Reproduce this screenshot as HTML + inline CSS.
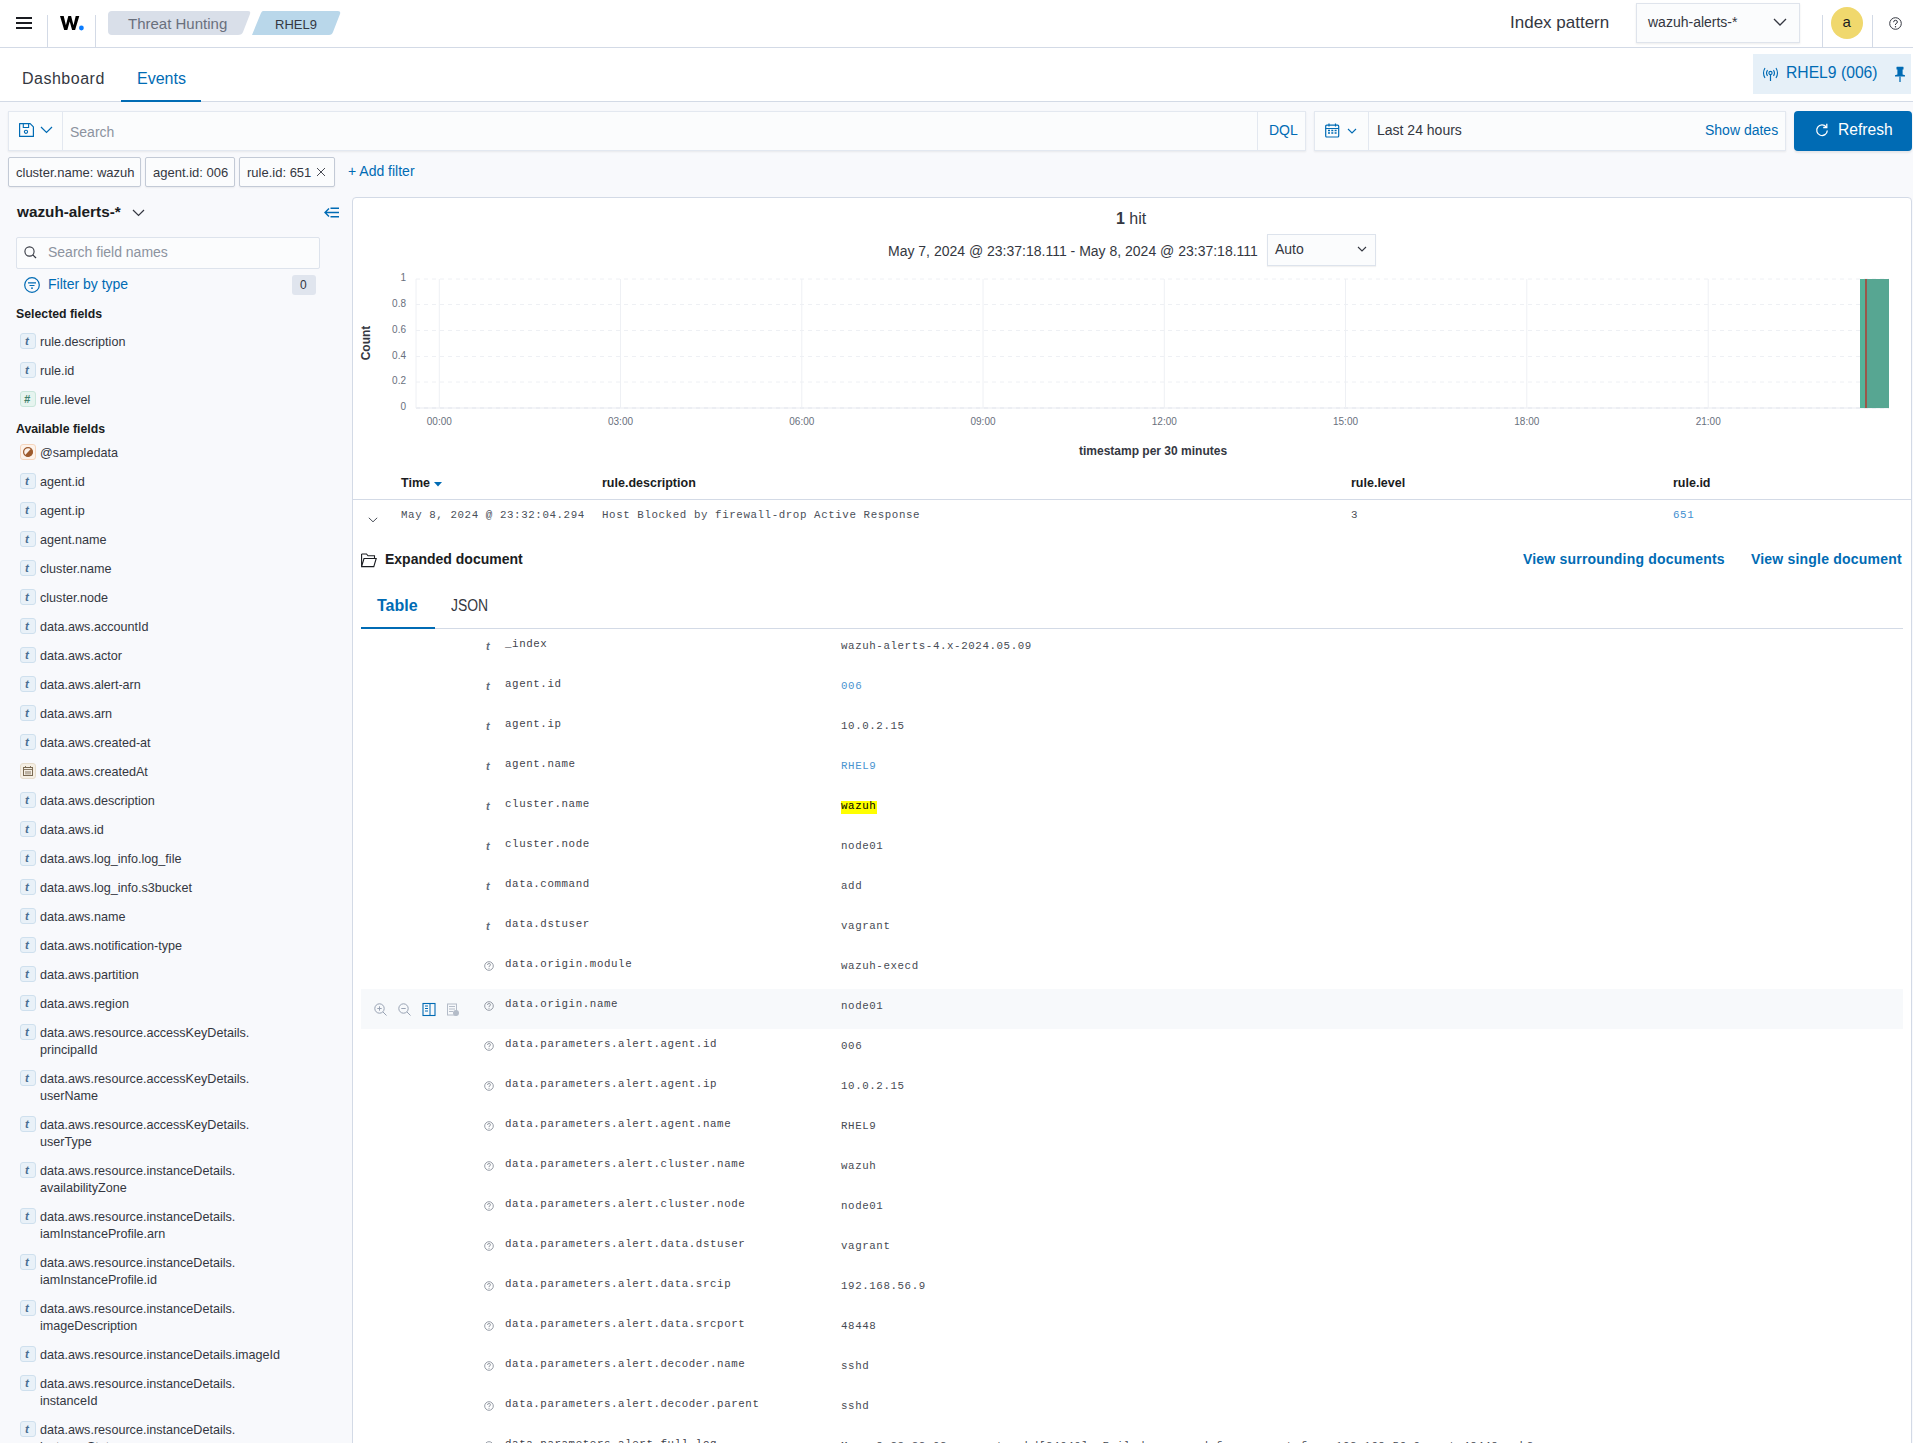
<!DOCTYPE html><html><head><meta charset="utf-8"><title>Wazuh</title><style>
*{box-sizing:border-box;margin:0;padding:0}
html,body{width:1913px;height:1443px;overflow:hidden}
body{position:relative;background:#f8f9fc;font-family:"Liberation Sans",sans-serif;color:#343741}
.abs{position:absolute}
.t{position:absolute;white-space:nowrap;line-height:1}
.mono{font-family:"Liberation Mono",monospace;font-size:10.8px !important;letter-spacing:0.59px !important}
.b{font-weight:bold}
.link{color:#006bb4}
svg{position:absolute;overflow:visible}
</style></head><body>
<div class="abs" style="left:0;top:0;width:1913px;height:48px;background:#fff;border-bottom:1px solid #d3dae6"></div>
<div class="abs" style="left:16px;top:17px;width:16px;height:2px;background:#1a1c21"></div>
<div class="abs" style="left:16px;top:22px;width:16px;height:2px;background:#1a1c21"></div>
<div class="abs" style="left:16px;top:27px;width:16px;height:2px;background:#1a1c21"></div>
<div class="abs" style="left:47px;top:15px;width:1px;height:32px;background:#d3dae6"></div>
<div class="abs" style="left:95px;top:15px;width:1px;height:32px;background:#d3dae6"></div>
<svg style="left:60px;top:15.7px" width="26" height="16"><path d="M0,0 H3.7 L5.9,9.2 L8.3,0 H11.1 L13.5,9.2 L15.7,0 H19.3 L15.1,14.1 H12.1 L9.7,5.4 L7.3,14.1 H4.2 Z" fill="#000"/><circle cx="21.4" cy="12" r="2.4" fill="#0a7cff"/></svg>
<svg style="left:0;top:0" width="400" height="48"><path d="M112,11 H248 Q251,11 250,14 L243,32 Q242,35 238,35 H112 Q108,35 108,31 V15 Q108,11 112,11 Z" fill="#d9dfe9"/><path d="M263,11 H338 Q341,11 340,14 L333,32 Q332,35 329,35 H252 L261,13 Q262,11 263,11 Z" fill="#b9d7ea"/></svg>
<div class="t" style="left:128px;top:16px;font-size:15px;color:#69707d">Threat Hunting</div>
<div class="t" style="left:275px;top:18px;font-size:13px;color:#343741">RHEL9</div>
<div class="t" style="left:1510px;top:14px;font-size:17px;color:#343741">Index pattern</div>
<div class="abs" style="left:1636px;top:3px;width:164px;height:40px;background:#fbfcfd;border:1px solid #dfe4ec;box-shadow:0 1px 2px rgba(0,0,0,.08)"></div>
<div class="t" style="left:1648px;top:15px;font-size:14px;color:#343741">wazuh-alerts-*</div>
<svg style="left:1773px;top:17px" width="14" height="10"><path d="M1,2 L7,8 L13,2" fill="none" stroke="#343741" stroke-width="1.3"/></svg>
<div class="abs" style="left:1822px;top:15px;width:1px;height:32px;background:#d3dae6"></div>
<div class="abs" style="left:1831px;top:7px;width:32px;height:32px;border-radius:50%;background:#f0d86d"></div>
<div class="t" style="left:1842.5px;top:14px;font-size:15px;color:#1a1c21">a</div>
<div class="abs" style="left:1872px;top:15px;width:1px;height:32px;background:#d3dae6"></div>
<svg style="left:1889px;top:17px" width="14" height="14"><circle cx="6.5" cy="6.5" r="5.8" fill="none" stroke="#343741" stroke-width="1"/><path d="M4.6,5.2 Q4.6,3.3 6.5,3.3 Q8.4,3.3 8.4,5 Q8.4,6.2 6.5,7 V8" fill="none" stroke="#343741" stroke-width="1"/><circle cx="6.5" cy="9.7" r=".7" fill="#343741"/></svg>
<div class="abs" style="left:0;top:48px;width:1913px;height:54px;background:#fff;border-bottom:1px solid #d3dae6"></div>
<div class="t" style="left:22px;top:71px;font-size:16px;letter-spacing:0.5px;color:#343741">Dashboard</div>
<div class="t" style="left:137px;top:71px;font-size:16px;color:#006bb4">Events</div>
<div class="abs" style="left:121px;top:100px;width:80px;height:2px;background:#006bb4"></div>
<div class="abs" style="left:1753px;top:54px;width:158px;height:40px;background:#e6f0f8"></div>
<div class="t" style="left:1786px;top:65px;font-size:15.7px;color:#006bb4">RHEL9 (006)</div>
<svg style="left:1762px;top:67px" width="18" height="16"><circle cx="8.5" cy="6" r="1.6" fill="none" stroke="#006bb4" stroke-width="1.1"/><path d="M8.5,7.6 V14" stroke="#006bb4" stroke-width="1.2"/><path d="M5.5,3 Q3.5,6 5.5,9 M11.5,3 Q13.5,6 11.5,9 M3,1 Q0,6 3,11 M14,1 Q17,6 14,11" fill="none" stroke="#006bb4" stroke-width="1.1"/></svg>
<svg style="left:1894px;top:66px" width="12" height="17"><path d="M2.5,1 Q2.5,0.8 3,0.8 H9 Q9.5,0.8 9.5,1 V3.5 H8.6 V8.5 L11,9.2 V10.6 H1 V9.2 L3.4,8.5 V3.5 H2.5 Z" fill="#006bb4"/><path d="M6,10.5 V16" stroke="#006bb4" stroke-width="1.3"/></svg>
<div class="abs" style="left:8px;top:111px;width:1298px;height:40px;background:#fbfcfd;border:1px solid #e3e8f0;box-shadow:0 1px 2px rgba(0,0,0,.07)"></div>
<div class="abs" style="left:62px;top:112px;width:1px;height:38px;background:#e3e8f0"></div>
<div class="abs" style="left:1257px;top:112px;width:1px;height:38px;background:#e3e8f0"></div>
<svg style="left:19px;top:123px" width="16" height="16"><path d="M0.6,0.6 H11.2 L14.4,3.8 V13.4 H0.6 Z" fill="none" stroke="#006bb4" stroke-width="1.2" stroke-linejoin="round"/><path d="M4.3,0.6 V4.5 H9.6 V0.6" fill="none" stroke="#006bb4" stroke-width="1.1"/><circle cx="7" cy="8.8" r="1.6" fill="none" stroke="#006bb4" stroke-width="1.1"/></svg>
<svg style="left:40px;top:126px" width="13" height="8"><path d="M1,1 L6.5,6.5 L12,1" fill="none" stroke="#006bb4" stroke-width="1.2"/></svg>
<div class="t" style="left:70px;top:125px;font-size:14px;color:#8c939f">Search</div>
<div class="t" style="left:1269px;top:123px;font-size:14px;color:#006bb4">DQL</div>
<div class="abs" style="left:1314px;top:111px;width:472px;height:40px;background:#fbfcfd;border:1px solid #e3e8f0;box-shadow:0 1px 2px rgba(0,0,0,.07)"></div>
<div class="abs" style="left:1368px;top:112px;width:1px;height:38px;background:#e3e8f0"></div>
<svg style="left:1325px;top:123px" width="15" height="15"><rect x="0.7" y="2.2" width="13" height="11.8" rx="1" fill="none" stroke="#006bb4" stroke-width="1.2"/><path d="M0.7,5.5 H13.7 M4,0.5 V3.5 M10.5,0.5 V3.5" stroke="#006bb4" stroke-width="1.2"/><path d="M3,7.5 h2 M6.3,7.5 h2 M9.6,7.5 h2 M3,10 h2 M6.3,10 h2 M9.6,10 h2" stroke="#006bb4" stroke-width="1.3"/></svg>
<svg style="left:1347px;top:128px" width="10" height="6"><path d="M1,1 L5,5 L9,1" fill="none" stroke="#006bb4" stroke-width="1.1"/></svg>
<div class="t" style="left:1377px;top:123px;font-size:14px;color:#343741">Last 24 hours</div>
<div class="t" style="left:1705px;top:123px;font-size:14px;color:#006bb4">Show dates</div>
<div class="abs" style="left:1794px;top:111px;width:118px;height:40px;background:#006bb4;border-radius:4px;box-shadow:0 2px 2px rgba(0,0,0,.08)"></div>
<svg style="left:1815px;top:123px" width="14" height="14"><path d="M11.2,4 A5.3,5.3 0 1 0 12.3,7.5" fill="none" stroke="#fff" stroke-width="1.3"/><path d="M11.8,0.8 V4.5 H8.2" fill="none" stroke="#fff" stroke-width="1.3"/></svg>
<div class="t" style="left:1838px;top:122px;font-size:15.6px;color:#fff">Refresh</div>
<div class="abs" style="left:8px;top:157px;width:133px;height:30px;background:#fbfcfd;border:1px solid #c3cad6;border-radius:2px;box-shadow:0 1px 2px rgba(0,0,0,.06)"></div>
<div class="t" style="left:16px;top:166px;font-size:13px;color:#343741">cluster.name: wazuh</div>
<div class="abs" style="left:145px;top:157px;width:90px;height:30px;background:#fbfcfd;border:1px solid #c3cad6;border-radius:2px;box-shadow:0 1px 2px rgba(0,0,0,.06)"></div>
<div class="t" style="left:153px;top:166px;font-size:13px;color:#343741">agent.id: 006</div>
<div class="abs" style="left:239px;top:157px;width:96px;height:30px;background:#fbfcfd;border:1px solid #c3cad6;border-radius:2px;box-shadow:0 1px 2px rgba(0,0,0,.06)"></div>
<div class="t" style="left:247px;top:166px;font-size:13px;color:#343741">rule.id: 651</div>
<svg style="left:316px;top:167px" width="10" height="10"><path d="M1,1 L9,9 M9,1 L1,9" stroke="#343741" stroke-width="0.9"/></svg>
<div class="t" style="left:348px;top:164px;font-size:14px;color:#006bb4">+ Add filter</div>
<div class="t b" style="left:17px;top:203.5px;font-size:15.3px;color:#1a1c21">wazuh-alerts-*</div>
<svg style="left:132px;top:209px" width="13" height="8"><path d="M1,1 L6.5,6.5 L12,1" fill="none" stroke="#343741" stroke-width="1.2"/></svg>
<svg style="left:324px;top:207px" width="16" height="11"><path d="M5,1.5 L1,5.5 L5,9.5 M1,5.5 H15" fill="none" stroke="#006bb4" stroke-width="1.4"/><path d="M6.5,1.2 H15 M6.5,9.8 H15" stroke="#006bb4" stroke-width="1.4"/></svg>
<div class="abs" style="left:16px;top:237px;width:304px;height:32px;background:#fbfcfd;border:1px solid #dde3ec;border-radius:2px"></div>
<svg style="left:24px;top:246px" width="13" height="13"><circle cx="5.5" cy="5.5" r="4.6" fill="none" stroke="#343741" stroke-width="1.1"/><path d="M8.8,8.8 L12,12" stroke="#343741" stroke-width="1.2"/></svg>
<div class="t" style="left:48px;top:245px;font-size:14px;color:#8c939f">Search field names</div>
<svg style="left:24px;top:277px" width="17" height="17"><circle cx="8" cy="8" r="7.3" fill="none" stroke="#006bb4" stroke-width="1.2"/><path d="M4,5.8 H12 M5.5,8.5 H10.5 M7,11.2 H9" stroke="#006bb4" stroke-width="1.2"/></svg>
<div class="t" style="left:48px;top:277px;font-size:14px;color:#006bb4">Filter by type</div>
<div class="abs" style="left:292px;top:275px;width:24px;height:20px;background:#e0e5ee;border-radius:3px"></div>
<div class="t" style="left:300px;top:279px;font-size:12px;color:#343741">0</div>
<div class="t b" style="left:16px;top:307.5px;font-size:12.3px;color:#1a1c21">Selected fields</div>
<div class="t b" style="left:16px;top:423px;font-size:12.3px;color:#1a1c21">Available fields</div>
<div class="abs" style="left:20px;top:333px;width:16px;height:16px;border-radius:3px;background:#e9f1f8;border:1px solid #cfe0ee"></div><div class="t b" style="left:25px;top:336px;font-size:11.5px;font-style:italic;color:#4a6f93">t</div><div class="t" style="left:40px;top:336px;font-size:12.6px;color:#343741">rule.description</div>
<div class="abs" style="left:20px;top:362px;width:16px;height:16px;border-radius:3px;background:#e9f1f8;border:1px solid #cfe0ee"></div><div class="t b" style="left:25px;top:365px;font-size:11.5px;font-style:italic;color:#4a6f93">t</div><div class="t" style="left:40px;top:365px;font-size:12.6px;color:#343741">rule.id</div>
<div class="abs" style="left:20px;top:391px;width:16px;height:16px;border-radius:3px;background:#e6f4ef;border:1px solid #c9e6db"></div><div class="t b" style="left:24px;top:394px;font-size:11px;font-style:italic;color:#3f7f6b">#</div><div class="t" style="left:40px;top:394px;font-size:12.6px;color:#343741">rule.level</div>
<div class="abs" style="left:20px;top:444px;width:16px;height:16px;border-radius:3px;background:#fdf3ec;border:1px solid #f5d5bd"></div><svg style="left:22px;top:446px" width="12" height="12"><circle cx="6" cy="6" r="4.4" fill="#fdf3ec" stroke="#9d5a2d" stroke-width="1.2"/><path d="M9.2,2.6 L2.8,9.4 A4.6,4.6 0 0 0 9.2,2.6 Z" fill="#9d5a2d"/></svg><div class="t" style="left:40px;top:447px;font-size:12.6px;color:#343741">@sampledata</div>
<div class="abs" style="left:20px;top:473px;width:16px;height:16px;border-radius:3px;background:#e9f1f8;border:1px solid #cfe0ee"></div><div class="t b" style="left:25px;top:476px;font-size:11.5px;font-style:italic;color:#4a6f93">t</div><div class="t" style="left:40px;top:476px;font-size:12.6px;color:#343741">agent.id</div>
<div class="abs" style="left:20px;top:502px;width:16px;height:16px;border-radius:3px;background:#e9f1f8;border:1px solid #cfe0ee"></div><div class="t b" style="left:25px;top:505px;font-size:11.5px;font-style:italic;color:#4a6f93">t</div><div class="t" style="left:40px;top:505px;font-size:12.6px;color:#343741">agent.ip</div>
<div class="abs" style="left:20px;top:531px;width:16px;height:16px;border-radius:3px;background:#e9f1f8;border:1px solid #cfe0ee"></div><div class="t b" style="left:25px;top:534px;font-size:11.5px;font-style:italic;color:#4a6f93">t</div><div class="t" style="left:40px;top:534px;font-size:12.6px;color:#343741">agent.name</div>
<div class="abs" style="left:20px;top:560px;width:16px;height:16px;border-radius:3px;background:#e9f1f8;border:1px solid #cfe0ee"></div><div class="t b" style="left:25px;top:563px;font-size:11.5px;font-style:italic;color:#4a6f93">t</div><div class="t" style="left:40px;top:563px;font-size:12.6px;color:#343741">cluster.name</div>
<div class="abs" style="left:20px;top:589px;width:16px;height:16px;border-radius:3px;background:#e9f1f8;border:1px solid #cfe0ee"></div><div class="t b" style="left:25px;top:592px;font-size:11.5px;font-style:italic;color:#4a6f93">t</div><div class="t" style="left:40px;top:592px;font-size:12.6px;color:#343741">cluster.node</div>
<div class="abs" style="left:20px;top:618px;width:16px;height:16px;border-radius:3px;background:#e9f1f8;border:1px solid #cfe0ee"></div><div class="t b" style="left:25px;top:621px;font-size:11.5px;font-style:italic;color:#4a6f93">t</div><div class="t" style="left:40px;top:621px;font-size:12.6px;color:#343741">data.aws.accountId</div>
<div class="abs" style="left:20px;top:647px;width:16px;height:16px;border-radius:3px;background:#e9f1f8;border:1px solid #cfe0ee"></div><div class="t b" style="left:25px;top:650px;font-size:11.5px;font-style:italic;color:#4a6f93">t</div><div class="t" style="left:40px;top:650px;font-size:12.6px;color:#343741">data.aws.actor</div>
<div class="abs" style="left:20px;top:676px;width:16px;height:16px;border-radius:3px;background:#e9f1f8;border:1px solid #cfe0ee"></div><div class="t b" style="left:25px;top:679px;font-size:11.5px;font-style:italic;color:#4a6f93">t</div><div class="t" style="left:40px;top:679px;font-size:12.6px;color:#343741">data.aws.alert-arn</div>
<div class="abs" style="left:20px;top:705px;width:16px;height:16px;border-radius:3px;background:#e9f1f8;border:1px solid #cfe0ee"></div><div class="t b" style="left:25px;top:708px;font-size:11.5px;font-style:italic;color:#4a6f93">t</div><div class="t" style="left:40px;top:708px;font-size:12.6px;color:#343741">data.aws.arn</div>
<div class="abs" style="left:20px;top:734px;width:16px;height:16px;border-radius:3px;background:#e9f1f8;border:1px solid #cfe0ee"></div><div class="t b" style="left:25px;top:737px;font-size:11.5px;font-style:italic;color:#4a6f93">t</div><div class="t" style="left:40px;top:737px;font-size:12.6px;color:#343741">data.aws.created-at</div>
<div class="abs" style="left:20px;top:763px;width:16px;height:16px;border-radius:3px;background:#f5efe4;border:1px solid #e6dccb"></div><svg style="left:23px;top:766px" width="10" height="10"><rect x="0.5" y="1.5" width="9" height="8" fill="none" stroke="#7a6a52" stroke-width="1"/><path d="M0.5,3.5 H9.5 M3,5 V8.5 M5,5 V8.5 M7,5 V8.5 M2.5,0 V2 M7.5,0 V2" stroke="#7a6a52" stroke-width="0.9"/></svg><div class="t" style="left:40px;top:766px;font-size:12.6px;color:#343741">data.aws.createdAt</div>
<div class="abs" style="left:20px;top:792px;width:16px;height:16px;border-radius:3px;background:#e9f1f8;border:1px solid #cfe0ee"></div><div class="t b" style="left:25px;top:795px;font-size:11.5px;font-style:italic;color:#4a6f93">t</div><div class="t" style="left:40px;top:795px;font-size:12.6px;color:#343741">data.aws.description</div>
<div class="abs" style="left:20px;top:821px;width:16px;height:16px;border-radius:3px;background:#e9f1f8;border:1px solid #cfe0ee"></div><div class="t b" style="left:25px;top:824px;font-size:11.5px;font-style:italic;color:#4a6f93">t</div><div class="t" style="left:40px;top:824px;font-size:12.6px;color:#343741">data.aws.id</div>
<div class="abs" style="left:20px;top:850px;width:16px;height:16px;border-radius:3px;background:#e9f1f8;border:1px solid #cfe0ee"></div><div class="t b" style="left:25px;top:853px;font-size:11.5px;font-style:italic;color:#4a6f93">t</div><div class="t" style="left:40px;top:853px;font-size:12.6px;color:#343741">data.aws.log_info.log_file</div>
<div class="abs" style="left:20px;top:879px;width:16px;height:16px;border-radius:3px;background:#e9f1f8;border:1px solid #cfe0ee"></div><div class="t b" style="left:25px;top:882px;font-size:11.5px;font-style:italic;color:#4a6f93">t</div><div class="t" style="left:40px;top:882px;font-size:12.6px;color:#343741">data.aws.log_info.s3bucket</div>
<div class="abs" style="left:20px;top:908px;width:16px;height:16px;border-radius:3px;background:#e9f1f8;border:1px solid #cfe0ee"></div><div class="t b" style="left:25px;top:911px;font-size:11.5px;font-style:italic;color:#4a6f93">t</div><div class="t" style="left:40px;top:911px;font-size:12.6px;color:#343741">data.aws.name</div>
<div class="abs" style="left:20px;top:937px;width:16px;height:16px;border-radius:3px;background:#e9f1f8;border:1px solid #cfe0ee"></div><div class="t b" style="left:25px;top:940px;font-size:11.5px;font-style:italic;color:#4a6f93">t</div><div class="t" style="left:40px;top:940px;font-size:12.6px;color:#343741">data.aws.notification-type</div>
<div class="abs" style="left:20px;top:966px;width:16px;height:16px;border-radius:3px;background:#e9f1f8;border:1px solid #cfe0ee"></div><div class="t b" style="left:25px;top:969px;font-size:11.5px;font-style:italic;color:#4a6f93">t</div><div class="t" style="left:40px;top:969px;font-size:12.6px;color:#343741">data.aws.partition</div>
<div class="abs" style="left:20px;top:995px;width:16px;height:16px;border-radius:3px;background:#e9f1f8;border:1px solid #cfe0ee"></div><div class="t b" style="left:25px;top:998px;font-size:11.5px;font-style:italic;color:#4a6f93">t</div><div class="t" style="left:40px;top:998px;font-size:12.6px;color:#343741">data.aws.region</div>
<div class="abs" style="left:20px;top:1024px;width:16px;height:16px;border-radius:3px;background:#e9f1f8;border:1px solid #cfe0ee"></div><div class="t b" style="left:25px;top:1027px;font-size:11.5px;font-style:italic;color:#4a6f93">t</div><div class="t" style="left:40px;top:1027px;font-size:12.6px;color:#343741">data.aws.resource.accessKeyDetails.</div><div class="t" style="left:40px;top:1044px;font-size:12.6px;color:#343741">principalId</div>
<div class="abs" style="left:20px;top:1070px;width:16px;height:16px;border-radius:3px;background:#e9f1f8;border:1px solid #cfe0ee"></div><div class="t b" style="left:25px;top:1073px;font-size:11.5px;font-style:italic;color:#4a6f93">t</div><div class="t" style="left:40px;top:1073px;font-size:12.6px;color:#343741">data.aws.resource.accessKeyDetails.</div><div class="t" style="left:40px;top:1090px;font-size:12.6px;color:#343741">userName</div>
<div class="abs" style="left:20px;top:1116px;width:16px;height:16px;border-radius:3px;background:#e9f1f8;border:1px solid #cfe0ee"></div><div class="t b" style="left:25px;top:1119px;font-size:11.5px;font-style:italic;color:#4a6f93">t</div><div class="t" style="left:40px;top:1119px;font-size:12.6px;color:#343741">data.aws.resource.accessKeyDetails.</div><div class="t" style="left:40px;top:1136px;font-size:12.6px;color:#343741">userType</div>
<div class="abs" style="left:20px;top:1162px;width:16px;height:16px;border-radius:3px;background:#e9f1f8;border:1px solid #cfe0ee"></div><div class="t b" style="left:25px;top:1165px;font-size:11.5px;font-style:italic;color:#4a6f93">t</div><div class="t" style="left:40px;top:1165px;font-size:12.6px;color:#343741">data.aws.resource.instanceDetails.</div><div class="t" style="left:40px;top:1182px;font-size:12.6px;color:#343741">availabilityZone</div>
<div class="abs" style="left:20px;top:1208px;width:16px;height:16px;border-radius:3px;background:#e9f1f8;border:1px solid #cfe0ee"></div><div class="t b" style="left:25px;top:1211px;font-size:11.5px;font-style:italic;color:#4a6f93">t</div><div class="t" style="left:40px;top:1211px;font-size:12.6px;color:#343741">data.aws.resource.instanceDetails.</div><div class="t" style="left:40px;top:1228px;font-size:12.6px;color:#343741">iamInstanceProfile.arn</div>
<div class="abs" style="left:20px;top:1254px;width:16px;height:16px;border-radius:3px;background:#e9f1f8;border:1px solid #cfe0ee"></div><div class="t b" style="left:25px;top:1257px;font-size:11.5px;font-style:italic;color:#4a6f93">t</div><div class="t" style="left:40px;top:1257px;font-size:12.6px;color:#343741">data.aws.resource.instanceDetails.</div><div class="t" style="left:40px;top:1274px;font-size:12.6px;color:#343741">iamInstanceProfile.id</div>
<div class="abs" style="left:20px;top:1300px;width:16px;height:16px;border-radius:3px;background:#e9f1f8;border:1px solid #cfe0ee"></div><div class="t b" style="left:25px;top:1303px;font-size:11.5px;font-style:italic;color:#4a6f93">t</div><div class="t" style="left:40px;top:1303px;font-size:12.6px;color:#343741">data.aws.resource.instanceDetails.</div><div class="t" style="left:40px;top:1320px;font-size:12.6px;color:#343741">imageDescription</div>
<div class="abs" style="left:20px;top:1346px;width:16px;height:16px;border-radius:3px;background:#e9f1f8;border:1px solid #cfe0ee"></div><div class="t b" style="left:25px;top:1349px;font-size:11.5px;font-style:italic;color:#4a6f93">t</div><div class="t" style="left:40px;top:1349px;font-size:12.6px;color:#343741">data.aws.resource.instanceDetails.imageId</div>
<div class="abs" style="left:20px;top:1375px;width:16px;height:16px;border-radius:3px;background:#e9f1f8;border:1px solid #cfe0ee"></div><div class="t b" style="left:25px;top:1378px;font-size:11.5px;font-style:italic;color:#4a6f93">t</div><div class="t" style="left:40px;top:1378px;font-size:12.6px;color:#343741">data.aws.resource.instanceDetails.</div><div class="t" style="left:40px;top:1395px;font-size:12.6px;color:#343741">instanceId</div>
<div class="abs" style="left:20px;top:1421px;width:16px;height:16px;border-radius:3px;background:#e9f1f8;border:1px solid #cfe0ee"></div><div class="t b" style="left:25px;top:1424px;font-size:11.5px;font-style:italic;color:#4a6f93">t</div><div class="t" style="left:40px;top:1424px;font-size:12.6px;color:#343741">data.aws.resource.instanceDetails.</div><div class="t" style="left:40px;top:1441px;font-size:12.6px;color:#343741">instanceState</div>
<div class="abs" style="left:352px;top:197px;width:1560px;height:1300px;background:#fff;border:1px solid #d3dae6;border-radius:4px"></div>
<div class="t" style="left:1116px;top:211px;font-size:16px;color:#343741"><b>1</b> hit</div>
<div class="t" style="left:888px;top:244px;font-size:14px;color:#343741">May 7, 2024 @ 23:37:18.111 - May 8, 2024 @ 23:37:18.111</div>
<div class="abs" style="left:1267px;top:234px;width:109px;height:32px;background:#fbfcfd;border:1px solid #dde3ec;box-shadow:0 1px 1px rgba(0,0,0,.05)"></div>
<div class="t" style="left:1275px;top:242px;font-size:14px;color:#343741">Auto</div>
<svg style="left:1357px;top:246px" width="10" height="6"><path d="M1,1 L5,5 L9,1" fill="none" stroke="#343741" stroke-width="1.1"/></svg>
<svg style="left:352px;top:260px" width="1560" height="210"><line x1="64" y1="19" x2="1537" y2="19" stroke="#eef0f4" stroke-width="1" stroke-dasharray="4,4"/><line x1="64" y1="44.5" x2="1537" y2="44.5" stroke="#eef0f4" stroke-width="1" stroke-dasharray="4,4"/><line x1="64" y1="70.5" x2="1537" y2="70.5" stroke="#eef0f4" stroke-width="1" stroke-dasharray="4,4"/><line x1="64" y1="96.5" x2="1537" y2="96.5" stroke="#eef0f4" stroke-width="1" stroke-dasharray="4,4"/><line x1="64" y1="122" x2="1537" y2="122" stroke="#eef0f4" stroke-width="1" stroke-dasharray="4,4"/><line x1="64" y1="148" x2="1537" y2="148" stroke="#f4f5f8" stroke-width="2"/><line x1="64" y1="148" x2="1537" y2="148" stroke="#eceef3" stroke-width="2" stroke-dasharray="4,4"/><line x1="64" y1="19" x2="64" y2="148" stroke="#eef0f4" stroke-width="1"/><line x1="87.30000000000001" y1="19" x2="87.30000000000001" y2="148" stroke="#eef0f4" stroke-width="1"/><line x1="268.5" y1="19" x2="268.5" y2="148" stroke="#eef0f4" stroke-width="1"/><line x1="449.79999999999995" y1="19" x2="449.79999999999995" y2="148" stroke="#eef0f4" stroke-width="1"/><line x1="631" y1="19" x2="631" y2="148" stroke="#eef0f4" stroke-width="1"/><line x1="812.3" y1="19" x2="812.3" y2="148" stroke="#eef0f4" stroke-width="1"/><line x1="993.5" y1="19" x2="993.5" y2="148" stroke="#eef0f4" stroke-width="1"/><line x1="1174.8" y1="19" x2="1174.8" y2="148" stroke="#eef0f4" stroke-width="1"/><line x1="1356.2" y1="19" x2="1356.2" y2="148" stroke="#eef0f4" stroke-width="1"/><rect x="1508" y="19" width="29" height="129" fill="#57a692"/><rect x="1508" y="19" width="5" height="129" fill="#54b399"/><rect x="1513" y="19" width="2" height="129" fill="#9a574a"/></svg>
<div class="t" style="left:306px;width:100px;text-align:right;top:273.4px;font-size:10px;color:#69707d">1</div>
<div class="t" style="left:306px;width:100px;text-align:right;top:298.9px;font-size:10px;color:#69707d">0.8</div>
<div class="t" style="left:306px;width:100px;text-align:right;top:324.9px;font-size:10px;color:#69707d">0.6</div>
<div class="t" style="left:306px;width:100px;text-align:right;top:350.9px;font-size:10px;color:#69707d">0.4</div>
<div class="t" style="left:306px;width:100px;text-align:right;top:376.4px;font-size:10px;color:#69707d">0.2</div>
<div class="t" style="left:306px;width:100px;text-align:right;top:401.9px;font-size:10px;color:#69707d">0</div>
<div class="t" style="left:389.3px;width:100px;text-align:center;top:416.7px;font-size:10px;color:#69707d">00:00</div>
<div class="t" style="left:570.5px;width:100px;text-align:center;top:416.7px;font-size:10px;color:#69707d">03:00</div>
<div class="t" style="left:751.8px;width:100px;text-align:center;top:416.7px;font-size:10px;color:#69707d">06:00</div>
<div class="t" style="left:933px;width:100px;text-align:center;top:416.7px;font-size:10px;color:#69707d">09:00</div>
<div class="t" style="left:1114.3px;width:100px;text-align:center;top:416.7px;font-size:10px;color:#69707d">12:00</div>
<div class="t" style="left:1295.5px;width:100px;text-align:center;top:416.7px;font-size:10px;color:#69707d">15:00</div>
<div class="t" style="left:1476.8px;width:100px;text-align:center;top:416.7px;font-size:10px;color:#69707d">18:00</div>
<div class="t" style="left:1658.2px;width:100px;text-align:center;top:416.7px;font-size:10px;color:#69707d">21:00</div>
<div class="t b" style="left:366px;top:343px;font-size:12px;color:#343741;transform:translate(-50%,-50%) rotate(-90deg)">Count</div>
<div class="t b" style="left:1079px;top:445px;font-size:12px;color:#343741">timestamp per 30 minutes</div>
<div class="t b" style="left:401px;top:477px;font-size:12.5px;color:#1a1c21">Time</div>
<svg style="left:434px;top:482px" width="8" height="5"><path d="M0,0 H8 L4,4.5 Z" fill="#006bb4"/></svg>
<div class="t b" style="left:602px;top:477px;font-size:12.5px;color:#1a1c21">rule.description</div>
<div class="t b" style="left:1351px;top:477px;font-size:12.5px;color:#1a1c21">rule.level</div>
<div class="t b" style="left:1673px;top:477px;font-size:12.5px;color:#1a1c21">rule.id</div>
<div class="abs" style="left:353px;top:499px;width:1558px;height:1px;background:#d3dae6"></div>
<svg style="left:368px;top:517px" width="11" height="7"><path d="M0.8,0.8 L5,4.8 L9.2,0.8" fill="none" stroke="#4a4f59" stroke-width="1"/></svg>
<div class="t mono" style="left:401px;top:510px;font-size:12px;color:#4a4f59;letter-spacing:-0.1px">May 8, 2024 @ 23:32:04.294</div>
<div class="t mono" style="left:602px;top:510px;font-size:12px;color:#4a4f59;letter-spacing:-0.1px">Host Blocked by firewall-drop Active Response</div>
<div class="t mono" style="left:1351px;top:510px;font-size:12px;color:#4a4f59">3</div>
<div class="t mono" style="left:1673px;top:510px;font-size:12px;color:#3f8fd0">651</div>
<svg style="left:361px;top:553px" width="16" height="15"><path d="M0.6,1 H5.5 L7,2.8 H13.5 V5.5 M0.6,1 V13.6 H12.8 L15.2,5.5 H3 L0.6,13.6" fill="none" stroke="#1a1c21" stroke-width="1.1"/></svg>
<div class="t b" style="left:385px;top:552px;font-size:14px;color:#1a1c21">Expanded document</div>
<div class="t b" style="left:1523px;top:552px;font-size:14px;color:#006bb4;letter-spacing:0.2px">View surrounding documents</div>
<div class="t b" style="left:1751px;top:552px;font-size:14px;color:#006bb4;letter-spacing:0.2px">View single document</div>
<div class="t b" style="left:377px;top:598px;font-size:16px;color:#006bb4">Table</div>
<div class="t" style="left:451px;top:598px;font-size:16px;color:#343741;transform:scaleX(0.87);transform-origin:0 0">JSON</div>
<div class="abs" style="left:361px;top:628px;width:1542px;height:1px;background:#d3dae6"></div>
<div class="abs" style="left:361px;top:627px;width:74px;height:2px;background:#006bb4"></div>
<div class="t b" style="left:486px;top:641px;font-size:11px;font-style:italic;color:#5f6b7c">t</div>
<div class="t mono" style="left:505px;top:639.4px;font-size:12px;letter-spacing:-0.12px;color:#3f434c">_index</div>
<div class="t mono" style="left:841px;top:641.4px;font-size:12px;letter-spacing:-0.12px;white-space:pre;color:#474b54">wazuh-alerts-4.x-2024.05.09</div>
<div class="t b" style="left:486px;top:681px;font-size:11px;font-style:italic;color:#5f6b7c">t</div>
<div class="t mono" style="left:505px;top:679.4px;font-size:12px;letter-spacing:-0.12px;color:#3f434c">agent.id</div>
<div class="t mono" style="left:841px;top:681.4px;font-size:12px;letter-spacing:-0.12px;white-space:pre;color:#4a94d0">006</div>
<div class="t b" style="left:486px;top:721px;font-size:11px;font-style:italic;color:#5f6b7c">t</div>
<div class="t mono" style="left:505px;top:719.4px;font-size:12px;letter-spacing:-0.12px;color:#3f434c">agent.ip</div>
<div class="t mono" style="left:841px;top:721.4px;font-size:12px;letter-spacing:-0.12px;white-space:pre;color:#474b54">10.0.2.15</div>
<div class="t b" style="left:486px;top:761px;font-size:11px;font-style:italic;color:#5f6b7c">t</div>
<div class="t mono" style="left:505px;top:759.4px;font-size:12px;letter-spacing:-0.12px;color:#3f434c">agent.name</div>
<div class="t mono" style="left:841px;top:761.4px;font-size:12px;letter-spacing:-0.12px;white-space:pre;color:#4a94d0">RHEL9</div>
<div class="t b" style="left:486px;top:801px;font-size:11px;font-style:italic;color:#5f6b7c">t</div>
<div class="t mono" style="left:505px;top:799.4px;font-size:12px;letter-spacing:-0.12px;color:#3f434c">cluster.name</div>
<div class="abs" style="left:841px;top:801px;width:36px;height:13px;background:#ffff00"></div>
<div class="t mono" style="left:841px;top:801.4px;font-size:12px;letter-spacing:-0.12px;color:#000">wazuh</div>
<div class="t b" style="left:486px;top:841px;font-size:11px;font-style:italic;color:#5f6b7c">t</div>
<div class="t mono" style="left:505px;top:839.4px;font-size:12px;letter-spacing:-0.12px;color:#3f434c">cluster.node</div>
<div class="t mono" style="left:841px;top:841.4px;font-size:12px;letter-spacing:-0.12px;white-space:pre;color:#474b54">node01</div>
<div class="t b" style="left:486px;top:881px;font-size:11px;font-style:italic;color:#5f6b7c">t</div>
<div class="t mono" style="left:505px;top:879.4px;font-size:12px;letter-spacing:-0.12px;color:#3f434c">data.command</div>
<div class="t mono" style="left:841px;top:881.4px;font-size:12px;letter-spacing:-0.12px;white-space:pre;color:#474b54">add</div>
<div class="t b" style="left:486px;top:921px;font-size:11px;font-style:italic;color:#5f6b7c">t</div>
<div class="t mono" style="left:505px;top:919.4px;font-size:12px;letter-spacing:-0.12px;color:#3f434c">data.dstuser</div>
<div class="t mono" style="left:841px;top:921.4px;font-size:12px;letter-spacing:-0.12px;white-space:pre;color:#474b54">vagrant</div>
<svg style="left:484px;top:961px" width="10" height="10"><circle cx="5" cy="5" r="4.3" fill="none" stroke="#8a919c" stroke-width="0.9"/><path d="M3.5,4 Q3.5,2.5 5,2.5 Q6.5,2.5 6.5,3.8 Q6.5,4.8 5,5.4 V6.2" fill="none" stroke="#8a919c" stroke-width="0.9"/><circle cx="5" cy="7.6" r=".5" fill="#8a919c"/></svg>
<div class="t mono" style="left:505px;top:959.4px;font-size:12px;letter-spacing:-0.12px;color:#3f434c">data.origin.module</div>
<div class="t mono" style="left:841px;top:961.4px;font-size:12px;letter-spacing:-0.12px;white-space:pre;color:#474b54">wazuh-execd</div>
<div class="abs" style="left:361px;top:989px;width:1542px;height:40px;background:#f7f9fb"></div>
<svg style="left:374px;top:1003px" width="90" height="14"><circle cx="5.5" cy="5.5" r="4.7" fill="none" stroke="#98a2b3" stroke-width="1"/><path d="M9,9 L12.5,12.5 M3.3,5.5 H7.7 M5.5,3.3 V7.7" stroke="#98a2b3" stroke-width="1"/><circle cx="29.5" cy="5.5" r="4.7" fill="none" stroke="#98a2b3" stroke-width="1"/><path d="M33,9 L36.5,12.5 M27.3,5.5 H31.7" stroke="#98a2b3" stroke-width="1"/><rect x="49" y="0.5" width="12" height="12" fill="none" stroke="#006bb4" stroke-width="1.1"/><path d="M56,0.5 V12.5 M51,3 H54 M51,5.5 H54 M51,8 H54" stroke="#006bb4" stroke-width="1"/><rect x="73.5" y="1" width="9" height="11" fill="none" stroke="#b4bcc8" stroke-width="1"/><path d="M75,3.5 H81 M75,6 H81 M75,8.5 H79" stroke="#b4bcc8" stroke-width="1"/><circle cx="82" cy="10" r="3" fill="#b4bcc8"/></svg>
<svg style="left:484px;top:1001px" width="10" height="10"><circle cx="5" cy="5" r="4.3" fill="none" stroke="#8a919c" stroke-width="0.9"/><path d="M3.5,4 Q3.5,2.5 5,2.5 Q6.5,2.5 6.5,3.8 Q6.5,4.8 5,5.4 V6.2" fill="none" stroke="#8a919c" stroke-width="0.9"/><circle cx="5" cy="7.6" r=".5" fill="#8a919c"/></svg>
<div class="t mono" style="left:505px;top:999.4px;font-size:12px;letter-spacing:-0.12px;color:#3f434c">data.origin.name</div>
<div class="t mono" style="left:841px;top:1001.4px;font-size:12px;letter-spacing:-0.12px;white-space:pre;color:#474b54">node01</div>
<svg style="left:484px;top:1041px" width="10" height="10"><circle cx="5" cy="5" r="4.3" fill="none" stroke="#8a919c" stroke-width="0.9"/><path d="M3.5,4 Q3.5,2.5 5,2.5 Q6.5,2.5 6.5,3.8 Q6.5,4.8 5,5.4 V6.2" fill="none" stroke="#8a919c" stroke-width="0.9"/><circle cx="5" cy="7.6" r=".5" fill="#8a919c"/></svg>
<div class="t mono" style="left:505px;top:1039.4px;font-size:12px;letter-spacing:-0.12px;color:#3f434c">data.parameters.alert.agent.id</div>
<div class="t mono" style="left:841px;top:1041.4px;font-size:12px;letter-spacing:-0.12px;white-space:pre;color:#474b54">006</div>
<svg style="left:484px;top:1081px" width="10" height="10"><circle cx="5" cy="5" r="4.3" fill="none" stroke="#8a919c" stroke-width="0.9"/><path d="M3.5,4 Q3.5,2.5 5,2.5 Q6.5,2.5 6.5,3.8 Q6.5,4.8 5,5.4 V6.2" fill="none" stroke="#8a919c" stroke-width="0.9"/><circle cx="5" cy="7.6" r=".5" fill="#8a919c"/></svg>
<div class="t mono" style="left:505px;top:1079.4px;font-size:12px;letter-spacing:-0.12px;color:#3f434c">data.parameters.alert.agent.ip</div>
<div class="t mono" style="left:841px;top:1081.4px;font-size:12px;letter-spacing:-0.12px;white-space:pre;color:#474b54">10.0.2.15</div>
<svg style="left:484px;top:1121px" width="10" height="10"><circle cx="5" cy="5" r="4.3" fill="none" stroke="#8a919c" stroke-width="0.9"/><path d="M3.5,4 Q3.5,2.5 5,2.5 Q6.5,2.5 6.5,3.8 Q6.5,4.8 5,5.4 V6.2" fill="none" stroke="#8a919c" stroke-width="0.9"/><circle cx="5" cy="7.6" r=".5" fill="#8a919c"/></svg>
<div class="t mono" style="left:505px;top:1119.4px;font-size:12px;letter-spacing:-0.12px;color:#3f434c">data.parameters.alert.agent.name</div>
<div class="t mono" style="left:841px;top:1121.4px;font-size:12px;letter-spacing:-0.12px;white-space:pre;color:#474b54">RHEL9</div>
<svg style="left:484px;top:1161px" width="10" height="10"><circle cx="5" cy="5" r="4.3" fill="none" stroke="#8a919c" stroke-width="0.9"/><path d="M3.5,4 Q3.5,2.5 5,2.5 Q6.5,2.5 6.5,3.8 Q6.5,4.8 5,5.4 V6.2" fill="none" stroke="#8a919c" stroke-width="0.9"/><circle cx="5" cy="7.6" r=".5" fill="#8a919c"/></svg>
<div class="t mono" style="left:505px;top:1159.4px;font-size:12px;letter-spacing:-0.12px;color:#3f434c">data.parameters.alert.cluster.name</div>
<div class="t mono" style="left:841px;top:1161.4px;font-size:12px;letter-spacing:-0.12px;white-space:pre;color:#474b54">wazuh</div>
<svg style="left:484px;top:1201px" width="10" height="10"><circle cx="5" cy="5" r="4.3" fill="none" stroke="#8a919c" stroke-width="0.9"/><path d="M3.5,4 Q3.5,2.5 5,2.5 Q6.5,2.5 6.5,3.8 Q6.5,4.8 5,5.4 V6.2" fill="none" stroke="#8a919c" stroke-width="0.9"/><circle cx="5" cy="7.6" r=".5" fill="#8a919c"/></svg>
<div class="t mono" style="left:505px;top:1199.4px;font-size:12px;letter-spacing:-0.12px;color:#3f434c">data.parameters.alert.cluster.node</div>
<div class="t mono" style="left:841px;top:1201.4px;font-size:12px;letter-spacing:-0.12px;white-space:pre;color:#474b54">node01</div>
<svg style="left:484px;top:1241px" width="10" height="10"><circle cx="5" cy="5" r="4.3" fill="none" stroke="#8a919c" stroke-width="0.9"/><path d="M3.5,4 Q3.5,2.5 5,2.5 Q6.5,2.5 6.5,3.8 Q6.5,4.8 5,5.4 V6.2" fill="none" stroke="#8a919c" stroke-width="0.9"/><circle cx="5" cy="7.6" r=".5" fill="#8a919c"/></svg>
<div class="t mono" style="left:505px;top:1239.4px;font-size:12px;letter-spacing:-0.12px;color:#3f434c">data.parameters.alert.data.dstuser</div>
<div class="t mono" style="left:841px;top:1241.4px;font-size:12px;letter-spacing:-0.12px;white-space:pre;color:#474b54">vagrant</div>
<svg style="left:484px;top:1281px" width="10" height="10"><circle cx="5" cy="5" r="4.3" fill="none" stroke="#8a919c" stroke-width="0.9"/><path d="M3.5,4 Q3.5,2.5 5,2.5 Q6.5,2.5 6.5,3.8 Q6.5,4.8 5,5.4 V6.2" fill="none" stroke="#8a919c" stroke-width="0.9"/><circle cx="5" cy="7.6" r=".5" fill="#8a919c"/></svg>
<div class="t mono" style="left:505px;top:1279.4px;font-size:12px;letter-spacing:-0.12px;color:#3f434c">data.parameters.alert.data.srcip</div>
<div class="t mono" style="left:841px;top:1281.4px;font-size:12px;letter-spacing:-0.12px;white-space:pre;color:#474b54">192.168.56.9</div>
<svg style="left:484px;top:1321px" width="10" height="10"><circle cx="5" cy="5" r="4.3" fill="none" stroke="#8a919c" stroke-width="0.9"/><path d="M3.5,4 Q3.5,2.5 5,2.5 Q6.5,2.5 6.5,3.8 Q6.5,4.8 5,5.4 V6.2" fill="none" stroke="#8a919c" stroke-width="0.9"/><circle cx="5" cy="7.6" r=".5" fill="#8a919c"/></svg>
<div class="t mono" style="left:505px;top:1319.4px;font-size:12px;letter-spacing:-0.12px;color:#3f434c">data.parameters.alert.data.srcport</div>
<div class="t mono" style="left:841px;top:1321.4px;font-size:12px;letter-spacing:-0.12px;white-space:pre;color:#474b54">48448</div>
<svg style="left:484px;top:1361px" width="10" height="10"><circle cx="5" cy="5" r="4.3" fill="none" stroke="#8a919c" stroke-width="0.9"/><path d="M3.5,4 Q3.5,2.5 5,2.5 Q6.5,2.5 6.5,3.8 Q6.5,4.8 5,5.4 V6.2" fill="none" stroke="#8a919c" stroke-width="0.9"/><circle cx="5" cy="7.6" r=".5" fill="#8a919c"/></svg>
<div class="t mono" style="left:505px;top:1359.4px;font-size:12px;letter-spacing:-0.12px;color:#3f434c">data.parameters.alert.decoder.name</div>
<div class="t mono" style="left:841px;top:1361.4px;font-size:12px;letter-spacing:-0.12px;white-space:pre;color:#474b54">sshd</div>
<svg style="left:484px;top:1401px" width="10" height="10"><circle cx="5" cy="5" r="4.3" fill="none" stroke="#8a919c" stroke-width="0.9"/><path d="M3.5,4 Q3.5,2.5 5,2.5 Q6.5,2.5 6.5,3.8 Q6.5,4.8 5,5.4 V6.2" fill="none" stroke="#8a919c" stroke-width="0.9"/><circle cx="5" cy="7.6" r=".5" fill="#8a919c"/></svg>
<div class="t mono" style="left:505px;top:1399.4px;font-size:12px;letter-spacing:-0.12px;color:#3f434c">data.parameters.alert.decoder.parent</div>
<div class="t mono" style="left:841px;top:1401.4px;font-size:12px;letter-spacing:-0.12px;white-space:pre;color:#474b54">sshd</div>
<svg style="left:484px;top:1441px" width="10" height="10"><circle cx="5" cy="5" r="4.3" fill="none" stroke="#8a919c" stroke-width="0.9"/><path d="M3.5,4 Q3.5,2.5 5,2.5 Q6.5,2.5 6.5,3.8 Q6.5,4.8 5,5.4 V6.2" fill="none" stroke="#8a919c" stroke-width="0.9"/><circle cx="5" cy="7.6" r=".5" fill="#8a919c"/></svg>
<div class="t mono" style="left:505px;top:1439.4px;font-size:12px;letter-spacing:-0.12px;color:#3f434c">data.parameters.alert.full_log</div>
<div class="t mono" style="left:841px;top:1441.4px;font-size:12px;letter-spacing:-0.12px;white-space:pre;color:#474b54">May  8 23:32:02 vagrant sshd[24040]: Failed password for vagrant from 192.168.56.9 port 48448 ssh2</div>
</body></html>
